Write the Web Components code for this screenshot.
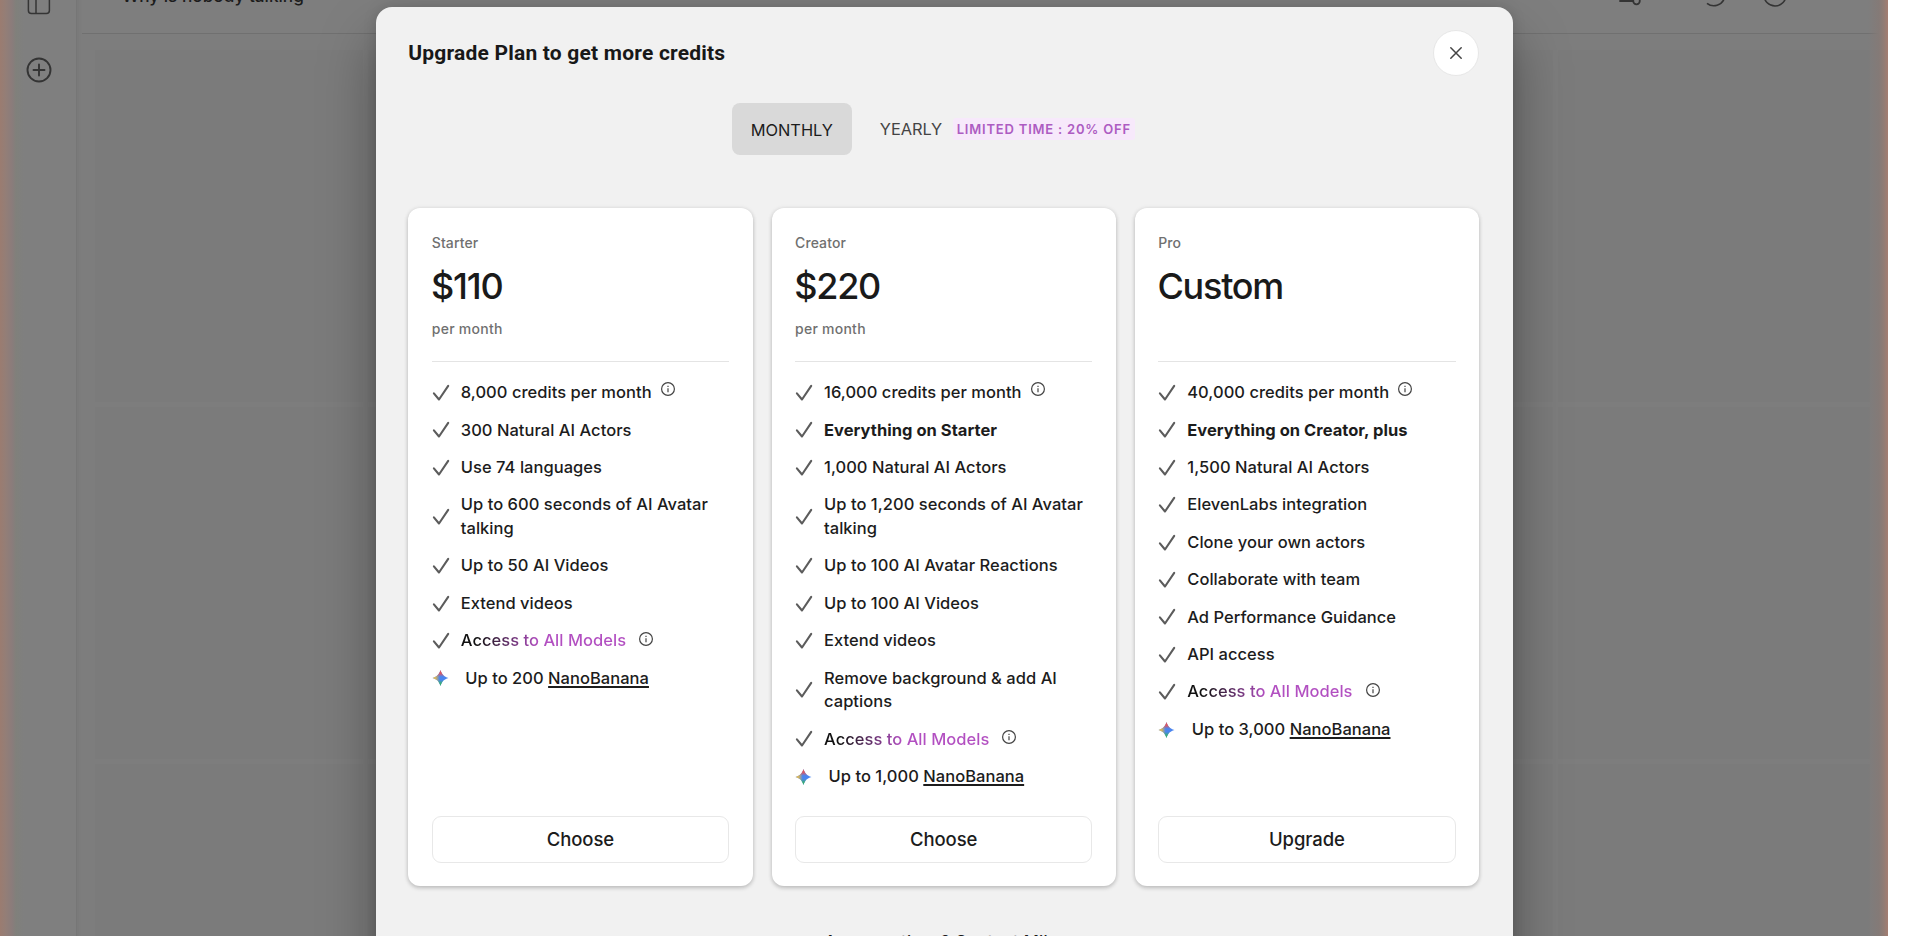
<!DOCTYPE html>
<html lang="en">
<head>
<meta charset="utf-8">
<title>Upgrade Plan</title>
<style>
html, body {
	margin: 0;
	height: 100%;
	overflow: hidden;
	background: #fff;
}

body {
	font-family: Inter, "Liberation Sans", sans-serif;
	color: #1c1c1c;
}
</style>
</head>
<body>

<app-shell>
	<span slot="title">Why is nobody talking</span>
	<plan-dialog slot="dialog">
		<span slot="title">Upgrade Plan to get more credits</span>
		<billing-toggle slot="toggle"></billing-toggle>

		<plan-card name="Starter" price="$110" period="per month" action="Choose">
			<plan-feature info>8,000 credits per month</plan-feature>
			<plan-feature>300 Natural AI Actors</plan-feature>
			<plan-feature>Use 74 languages</plan-feature>
			<plan-feature>Up to 600 seconds of AI Avatar talking</plan-feature>
			<plan-feature>Up to 50 AI Videos</plan-feature>
			<plan-feature>Extend videos</plan-feature>
			<plan-feature info highlight>Access to All Models</plan-feature>
			<plan-feature icon="spark">Up to 200 <u>NanoBanana</u></plan-feature>
		</plan-card>

		<plan-card name="Creator" price="$220" period="per month" action="Choose">
			<plan-feature info>16,000 credits per month</plan-feature>
			<plan-feature strong>Everything on Starter</plan-feature>
			<plan-feature>1,000 Natural AI Actors</plan-feature>
			<plan-feature>Up to 1,200 seconds of AI Avatar talking</plan-feature>
			<plan-feature>Up to 100 AI Avatar Reactions</plan-feature>
			<plan-feature>Up to 100 AI Videos</plan-feature>
			<plan-feature>Extend videos</plan-feature>
			<plan-feature>Remove background &amp; add AI captions</plan-feature>
			<plan-feature info highlight>Access to All Models</plan-feature>
			<plan-feature icon="spark">Up to 1,000 <u>NanoBanana</u></plan-feature>
		</plan-card>

		<plan-card name="Pro" price="Custom" action="Upgrade">
			<plan-feature info>40,000 credits per month</plan-feature>
			<plan-feature strong>Everything on Creator, plus</plan-feature>
			<plan-feature>1,500 Natural AI Actors</plan-feature>
			<plan-feature>ElevenLabs integration</plan-feature>
			<plan-feature>Clone your own actors</plan-feature>
			<plan-feature>Collaborate with team</plan-feature>
			<plan-feature>Ad Performance Guidance</plan-feature>
			<plan-feature>API access</plan-feature>
			<plan-feature info highlight>Access to All Models</plan-feature>
			<plan-feature icon="spark">Up to 3,000 <u>NanoBanana</u></plan-feature>
		</plan-card>

		<span slot="footer">Any questions? Contact Mike</span>
	</plan-dialog>
</app-shell>

<script>
const ICONS = {
	check: `<svg width="18" height="18" viewBox="0 0 18 18" fill="none" stroke="#5c5c5c" stroke-width="2.1" stroke-linecap="round" stroke-linejoin="round">
		<path d="M1.9 9.3 7 15.5 16.2 1.9"/></svg>`,
	spark: `<svg width="18" height="18" viewBox="0 0 18 18">
		<defs>
			<linearGradient id="h" x1="0" x2="1"><stop offset=".15" stop-color="#efbd42"/><stop offset=".45" stop-color="#efbd42" stop-opacity="0"/></linearGradient>
			<linearGradient id="t" x1="0" y1="0" x2="0" y2="1"><stop offset=".2" stop-color="#e2575c"/><stop offset=".42" stop-color="#e2575c" stop-opacity="0"/></linearGradient>
			<linearGradient id="b" x1="0" y1="1" x2="0" y2="0"><stop offset=".15" stop-color="#3bb06c"/><stop offset=".38" stop-color="#3bb06c" stop-opacity="0"/></linearGradient>
			<path id="s" d="M8.5 1C9.7 5.2 12 7.8 16.5 9 12 10.2 9.7 12.8 8.5 17 7.3 12.8 5 10.200.5 9 5 7.800 7.300 5.200 8.500 1Z"/>
		</defs>
		<use href="#s" fill="#4a85ef"/><use href="#s" fill="url(#h)"/><use href="#s" fill="url(#t)"/><use href="#s" fill="url(#b)"/></svg>`,
	info: `<svg width="16" height="16" viewBox="0 0 16 16" fill="none" stroke="#444" stroke-width="1.2">
		<circle cx="8" cy="8" r="6.4"/><path d="M8 7.2V11.2"/><path d="M8 4.8V6"/></svg>`,
	close: `<svg width="14" height="14" viewBox="0 0 14 14" fill="none" stroke="#444" stroke-width="1.5" stroke-linecap="round">
		<path d="M1.8 1.8 12.2 12.2M12.2 1.8 1.8 12.2"/></svg>`,
	panel: `<svg width="24" height="24" viewBox="0 0 24 24" fill="none" stroke="#353535" stroke-width="1.5">
		<rect x="1.4" y="1.6" width="21" height="21" rx="3"/><path d="M9 2V22.5"/></svg>`,
	plus: `<svg width="26" height="26" viewBox="0 0 26 26" fill="none" stroke="#343434" stroke-width="1.9" stroke-linecap="round">
		<circle cx="13" cy="13" r="11.5"/><path d="M7.5 13H18.5M13 7.5V18.5"/></svg>`,
	tune: `<svg width="24" height="24" viewBox="0 0 24 24" fill="none" stroke="#343434" stroke-width="1.8" stroke-linecap="round">
		<path d="M2 6H8M15 6H22M3 18H16"/><circle cx="12" cy="6" r="3.3"/><circle cx="19.5" cy="18" r="3.3"/></svg>`,
	history: `<svg width="24" height="24" viewBox="0 0 24 24" fill="none" stroke="#343434" stroke-width="1.6">
		<path d="M5 20.3A11 11 0 1 0 2 16.5"/><path d="M12 5V12L15 15.5"/></svg>`,
	help: `<svg width="24" height="24" viewBox="0 0 24 24" fill="none" stroke="#343434" stroke-width="1.6">
		<circle cx="12" cy="12" r="11"/><path d="M12 10V17M12 6V8"/></svg>`
};

class AppShell extends HTMLElement {
	constructor() {
		super();
		this.attachShadow({mode:"open"}).innerHTML = `
<style>
:host {
	position: relative;
	display: grid;
	grid-template-columns: 77px 1fr;
	width: 1888px;
	height: 100vh;
	overflow: hidden;
	background: #7d7d7d;
}

nav {
	display: flex;
	flex-direction: column;
	align-items: center;
	gap: 42px;
	margin-top: -9px;
	padding-left: 1px;
	border-right: 1px solid #767676;
	background: #7f7f7f;
	box-shadow: 1px 0 2px #787878;
}
nav svg { flex: none; }

main {
	display: grid;
	grid-template-rows: 34px 1fr;
	min-width: 0;
}

header {
	display: flex;
	align-items: flex-start;
	justify-content: space-between;
	box-sizing: border-box;
	margin-left: 5px;
	padding: 0 101px 0 40px;
	border-bottom: 1.5px solid #707070;
	background: #7e7e7e;
}
.title {
	margin-top: -16px;
	font: 500 17.2px/24px Inter, sans-serif;
	color: #1c1c1c;
}
.tools { display: flex; margin-top: -17px; }
.tools svg:nth-child(2) { margin-left: 61px; }
.tools svg:nth-child(3) { margin-left: 37px; }

section {
	display: grid;
	grid-template-columns: 268px 1fr 312px;
	grid-template-rows: 352px 352px 1fr;
	gap: 5px;
	padding: 16px 18px 0;
}
section div { background: #7b7b7b; }

/* warm glow along both window edges, over everything in the shell */
.glow {
	position: absolute;
	inset: 0;
	pointer-events: none;
	background:
		linear-gradient(to right, #9b7c70 0, #937e77 6px, #8a7c7b 12px, #80807b 16px, #7d7f7b00 24px),
		linear-gradient(to left, #a47d71 0, #927c74 4px, #847a77 9px, #7d7d7600 20px);
}

.dialog {
	position: absolute;
	inset: 6.5px 0 0 376px;
	width: 1136.5px;
}
</style>
<nav>${ICONS.panel}${ICONS.plus}</nav>
<main>
	<header>
		<div class="title"><slot name="title"></slot></div>
		<div class="tools">${ICONS.tune}${ICONS.history}${ICONS.help}</div>
	</header>
	<section><div></div><div></div><div></div><div></div><div></div><div></div><div></div><div></div><div></div></section>
</main>
<div class="glow"></div>
<div class="dialog"><slot name="dialog"></slot></div>
`;
	}
}

class PlanDialog extends HTMLElement {
	constructor() {
		super();
		this.attachShadow({mode:"open"}).innerHTML = `
<style>
:host {
	display: flex;
	flex-direction: column;
	box-sizing: border-box;
	height: 1000px;
	padding: 24px 33.5px 0 32.3px;
	border-radius: 16px;
	background: #f1f1f1;
	box-shadow: 0 32px 56px #00000059, 0 0 14px #0002;
}

header {
	display: flex;
	align-items: center;
	justify-content: space-between;
	height: 45px;
}
h1 {
	margin: 0;
	font: 700 21px/28px Roboto, sans-serif;
	letter-spacing: .2px;
	color: #181818;
}
button {
	display: grid;
	place-items: center;
	width: 46px;
	height: 46px;
	padding: 0;
	border: 1px solid #e7e7e7;
	border-radius: 50%;
	background: #fff;
}

.toggle {
	display: flex;
	justify-content: center;
	margin: 27.3px 0 53.2px;
}

.plans {
	display: grid;
	grid-template-columns: repeat(3, 1fr);
	gap: 19px;
	height: 678px;
}

footer {
	margin-top: 43.5px;
	text-align: center;
	font-size: 16.5px;
	line-height: 24px;
	font-weight: 500;
	letter-spacing: .3px;
}
</style>
<header>
	<h1><slot name="title"></slot></h1>
	<button aria-label="Close">${ICONS.close}</button>
</header>
<div class="toggle"><slot name="toggle"></slot></div>
<div class="plans"><slot></slot></div>
<footer><slot name="footer"></slot></footer>
`;
	}
}

class BillingToggle extends HTMLElement {
	constructor() {
		super();
		this.attachShadow({mode:"open"}).innerHTML = `
<style>
:host {
	display: flex;
	align-items: center;
	font-size: 16.4px;
	line-height: 24px;
	letter-spacing: -.05px;
}
.active {
	box-sizing: border-box;
	width: 120px;
	height: 52px;
	padding: 15px 0 0;
	border-radius: 8px;
	background: #d9d9d9;
	text-align: center;
}
.yearly {
	display: flex;
	align-items: center;
	gap: 10.5px;
	margin: 0 20.5px 0 28px;
	color: #444;
}
mark {
	padding: 0 4px;
	border-radius: 3px;
	background: #f7e9fb;
	color: #ad5cc2;
	font-size: 13px;
	font-weight: 600;
	line-height: 22px;
	letter-spacing: .8px;
}
</style>
<div class="active">MONTHLY</div>
<div class="yearly">YEARLY <mark>LIMITED TIME : 20% OFF</mark></div>
`;
	}
}

class PlanCard extends HTMLElement {
	constructor() {
		super();
		this.attachShadow({mode:"open"});
	}

	connectedCallback() {
		let attr = name => this.getAttribute(name) ?? "";
		this.shadowRoot.innerHTML = `
<style>
:host {
	display: flex;
	flex-direction: column;
	box-sizing: border-box;
	padding: 24px 23.5px 23px;
	border-radius: 12px;
	background: #fff;
	box-shadow: 0 2px 4px #0003, 0 0 5px #00000012;
}
.name, .period {
	height: 22px;
	font-size: 14px;
	font-weight: 500;
	line-height: 22px;
	letter-spacing: .1px;
	color: #707070;
}
.period { letter-spacing: .25px; }
.price {
	margin: 9px 0 9px -.8px;
	font-size: 36px;
	font-weight: 500;
	line-height: 46px;
	letter-spacing: -1.25px;
	color: #1a1a1a;
}
.features {
	display: flex;
	flex-direction: column;
	gap: 13.8px;
	margin-top: 21px;
	padding-top: 19.3px;
	border-top: 1.5px solid #e4e4e4;
}
button {
	height: 47px;
	margin-top: auto;
	padding-top: 1px;
	border: 1.5px solid #e8e8e8;
	border-radius: 9px;
	background: #fff;
	color: #1c1c1c;
	font: 500 18.5px Inter, sans-serif;
	letter-spacing: -.1px;
}
</style>
<div class="name">${attr("name")}</div>
<div class="price">${attr("price")}</div>
<div class="period">${attr("period")}</div>
<div class="features"><slot></slot></div>
<button>${attr("action")}</button>
`;
	}
}

class PlanFeature extends HTMLElement {
	constructor() {
		super();
		this.attachShadow({mode:"open"});
	}

	connectedCallback() {
		let icon = this.getAttribute("icon") ?? "check";
		this.shadowRoot.innerHTML = `
<style>
:host {
	display: flex;
	align-items: center;
	font-size: 16.5px;
	font-weight: 500;
	line-height: 23.6px;
	letter-spacing: .03px;
	color: #1c1c1c;
}
:host([strong]) { font-weight: 700; }
:host([icon=spark]) .text { margin-left: 4.5px; }
:host([highlight]) .text {
	background: linear-gradient(to right, #111 10%, #b24fc1 47%);
	background-clip: text;
	-webkit-text-fill-color: transparent;
}
.icon {
	display: flex;
	flex: none;
	width: 29px;
}
.info {
	display: flex;
	margin: -8px 0 0 8px;
}
:host([highlight]) .info { margin: -5px 0 0 12px; }
::slotted(u) {
	text-decoration-thickness: 1.5px;
	text-underline-offset: 1.8px;
}
</style>
<span class="icon">${ICONS[icon]}</span>
<span class="text"><slot></slot></span>
${this.hasAttribute("info") ? `<span class="info">${ICONS.info}</span>` : ""}
`;
	}
}

customElements.define("app-shell", AppShell);
customElements.define("plan-dialog", PlanDialog);
customElements.define("billing-toggle", BillingToggle);
customElements.define("plan-card", PlanCard);
customElements.define("plan-feature", PlanFeature);
</script>
</body>
</html>
